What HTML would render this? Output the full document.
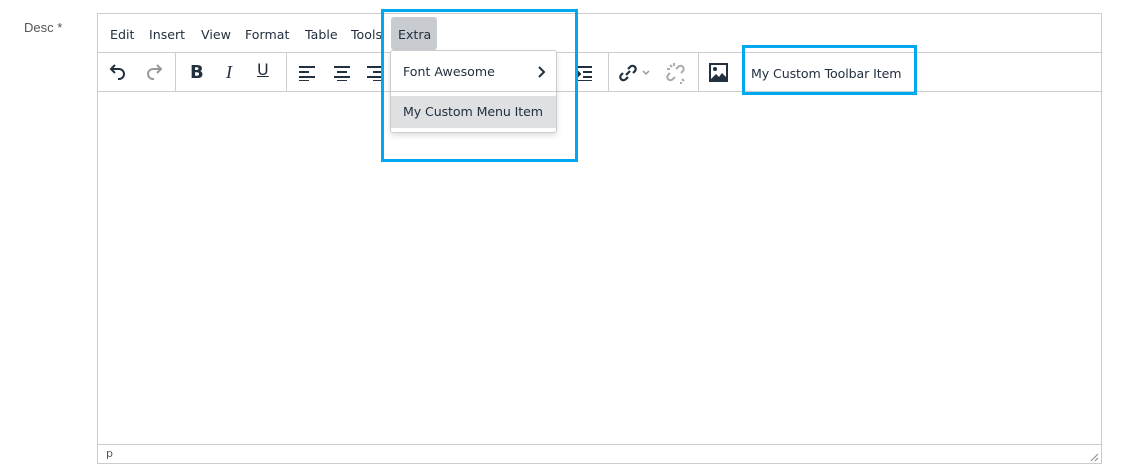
<!DOCTYPE html>
<html><head><style>
body{margin:0;width:1135px;height:472px;background:#fff;font-family:"DejaVu Sans","Liberation Sans",sans-serif;color:#222f3e;position:relative;overflow:hidden}
.abs{position:absolute}
.lbl{left:24px;top:20px;font-size:13px;color:#555;font-family:"Liberation Sans",sans-serif}
.ed{left:97px;top:13px;width:1003px;height:449px;border:1px solid #ccc}
.mb{position:absolute;left:0;top:0;width:1003px;height:38px;border-bottom:1px solid #ccc}
.mb span{position:absolute;top:13px;font-size:12.6px}
.tb{position:absolute;left:0;top:39px;width:1003px;height:38px;border-bottom:1px solid #ccc}
.sep{position:absolute;top:0;width:1px;height:38px;background:#ccc}
svg{position:absolute}
.st{position:absolute;left:0;top:430px;width:1003px;height:19px;border-top:1px solid #ccc;font-size:11px;color:#555}
.blue{border:3px solid #00a8f0;position:absolute}
</style></head><body>
<div class="abs lbl">Desc *</div>
<div class="abs ed">
 <div class="mb">
  <span style="left:12px">Edit</span><span style="left:51px">Insert</span><span style="left:103px">View</span><span style="left:147px">Format</span><span style="left:207px">Table</span><span style="left:253px">Tools</span>
  <div style="position:absolute;left:293px;top:3px;width:46px;height:33px;background:#c8cbcf;border-radius:3px"></div>
  <span style="left:300px">Extra</span>
 </div>
 <div class="tb">
  <svg style="left:10px;top:10px" width="20" height="20" viewBox="0 0 20 20"><path d="M7 2L3 6l4 4M3 6h8a5 5 0 0 1 0 10h-1" fill="none" stroke="#222f3e" stroke-width="2"/></svg>
  <svg style="left:46px;top:10px" width="20" height="20" viewBox="0 0 20 20"><path d="M13 2l4 4-4 4M17 6H9a5 5 0 0 0 0 10h1" fill="none" stroke="#999" stroke-width="2"/></svg>
  <div class="sep" style="left:77px"></div>
  <span style="position:absolute;left:92px;top:9px;font-weight:bold;font-size:18px">B</span>
  <span style="position:absolute;left:128px;top:9px;font-style:italic;font-size:18px;font-family:'Liberation Serif',serif">I</span>
  <span style="position:absolute;left:159px;top:7px;text-decoration:underline;font-size:16px">U</span>
  <div class="sep" style="left:188px"></div>
  <svg style="left:200px;top:12px" width="20" height="16"><path d="M1 2h16M1 7h10M1 12h16M1 16h10" stroke="#222f3e" stroke-width="2"/></svg>
  <svg style="left:235px;top:12px" width="20" height="16"><path d="M1 2h16M4 7h10M1 12h16M4 16h10" stroke="#222f3e" stroke-width="2"/></svg>
  <svg style="left:268px;top:12px" width="20" height="16"><path d="M1 2h16M7 7h10M1 12h16M7 16h10" stroke="#222f3e" stroke-width="2"/></svg>
  <svg style="left:476px;top:12px" width="24" height="16"><path d="M2 2h16M9 7h9M9 12h9M2 16h16M2 5l4 4-4 4z" stroke="#222f3e" stroke-width="2" fill="#222f3e"/></svg>
  <div class="sep" style="left:510px"></div>
  <svg style="left:520px;top:9px" width="34" height="22" viewBox="0 0 34 22"><path d="M8 13l4-4M10 7l2-2a3 3 0 0 1 5 4l-2 2M10 15l-2 2a3 3 0 0 1-5-4l2-2" fill="none" stroke="#222f3e" stroke-width="2.2"/><path d="M25 9l3 3 3-3" fill="none" stroke="#999" stroke-width="1.5"/></svg>
  <svg style="left:567px;top:9px" width="24" height="22" viewBox="0 0 24 22"><path d="M11 7l2-2a3 3 0 0 1 5 4l-2 2M10 15l-2 2a3 3 0 0 1-5-4l2-2M5 3l2 2M2 7h3M9 1v3M17 17l2 2M16 20v2" fill="none" stroke="#aaa" stroke-width="2"/></svg>
  <div class="sep" style="left:600px"></div>
  <svg style="left:611px;top:10px" width="20" height="20" viewBox="0 0 20 20"><rect x="1" y="1" width="17" height="17" fill="none" stroke="#222f3e" stroke-width="2"/><circle cx="6" cy="6" r="2" fill="#222f3e"/><path d="M2 16l5-5 3 3 3-4 5 5v2H2z" fill="#222f3e"/></svg>
  <span style="position:absolute;left:653px;top:13px;font-size:12.6px;letter-spacing:-0.1px">My Custom Toolbar Item</span>
 </div>
 <div class="st"><span style="position:absolute;left:8px;top:2px">p</span>
  <svg style="right:2px;bottom:2px" width="10" height="10"><path d="M9 2L2 9M9 6L6 9" stroke="#888"/></svg></div>
</div>
<div class="abs" style="left:390px;top:50px;width:165px;height:81px;background:#fff;border:1px solid #ccc;border-radius:3px;box-shadow:0 3px 6px rgba(0,0,0,.12)">
 <span style="position:absolute;left:12px;top:13px;font-size:12.6px">Font Awesome</span>
 <svg style="left:146px;top:15px" width="10" height="12"><path d="M2 1l5 5-5 5" fill="none" stroke="#222f3e" stroke-width="2"/></svg>
 <div style="position:absolute;left:0;top:40px;width:165px;height:1px;background:#ccc"></div>
 <div style="position:absolute;left:0;top:45px;width:165px;height:32px;background:#dee0e2"></div>
 <span style="position:absolute;left:12px;top:53px;font-size:12.6px;letter-spacing:-0.1px">My Custom Menu Item</span>
</div>
<div class="blue" style="left:381px;top:9px;width:191px;height:147px"></div>
<div class="blue" style="left:742px;top:45px;width:169px;height:44px"></div>
</body></html>
